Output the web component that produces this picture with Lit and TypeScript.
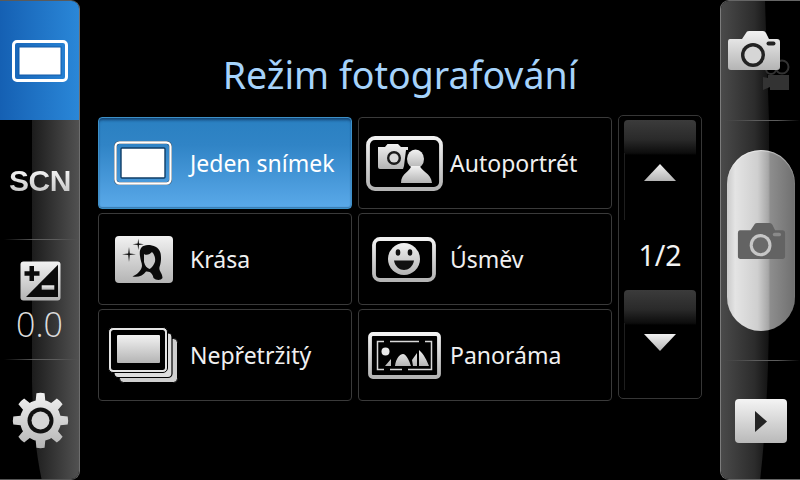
import { LitElement, html, css, svg } from "lit";
import { customElement } from "lit/decorators.js";

function gearPath(cx: number, cy: number, ro: number, ri: number, teeth: number) {
  const pts: string[] = [];
  const step = (Math.PI * 2) / teeth;
  for (let i = 0; i < teeth; i++) {
    const a = -Math.PI / 2 + i * step;
    const p = (r: number, d: number) => `${(cx + r * Math.cos(a + d)).toFixed(2)} ${(cy + r * Math.sin(a + d)).toFixed(2)}`;
    pts.push(`${i ? "L" : "M"}${p(ri, -step * 0.3)}`, `L${p(ro, -step * 0.19)}`, `Q${p(ro + 0.6, 0)} ${p(ro, step * 0.19)}`, `L${p(ri, step * 0.3)}`);
    pts.push(`Q${p(ri + 0.3, step * 0.4)} ${p(ri, step * 0.5)}`);
  }
  return pts.join(" ") + "Z";
}

const camera = (body: string, ring: string, center: string, flash: string) => svg`
  <path d="M3 9 H15 L19 3 Q19.5 1 22 1 H36 Q38 1 39 3 L42 9 H50 Q53 9 53 12 V37 Q53 40 50 40 H4 Q1 40 1 37 V12 Q1 9 3 9Z" fill="${body}"/>
  <circle cx="26" cy="25" r="12" fill="${ring}"/>
  <circle cx="26" cy="25" r="8.6" fill="${center}"/>
  <rect x="39.5" y="11.5" width="9" height="4" rx="2" fill="${flash}"/>`;

@customElement("app-root")
export class AppRoot extends LitElement {
  static styles = css`
    :host { display: block; width: 800px; height: 480px; background: #000; overflow: hidden; font-family: "Noto Sans", "Open Sans", sans-serif; color: #f2f2f2; }
    .defs { position: absolute; width: 0; height: 0; }
    .screen { display: flex; width: 800px; height: 480px; }
    .rail { position: relative; width: 80px; height: 480px; box-sizing: border-box; flex: none; display: flex; flex-direction: column; overflow: hidden; }
    .rail.left { border-right: 1px solid #6e6e6e; border-bottom: 1px solid #555; border-top: 1px solid #5a5a5a; border-radius: 0 9px 9px 0; }
    .rail.right { border-left: 1px solid #7c7c7c; border-top: 1px solid #666; border-bottom: 1px solid #666; border-radius: 9px 0 0 9px; }
    .sheen { position: absolute; left: 0; top: 0; width: 80px; height: 480px; }
    .item { position: relative; height: 120px; flex: none; display: flex; flex-direction: column; align-items: center; justify-content: center; box-sizing: border-box; }
    .left .item.first { height: 119px; background: linear-gradient(90deg, #1560b3, #2a87d8); }
    .sep::after { content: ""; position: absolute; left: 4px; right: 0; bottom: 0; height: 1px; background: linear-gradient(90deg, transparent, #5c5c5c 40%, #5c5c5c 70%, transparent); }
    .scntext { font: 700 30px "Liberation Sans", Arial, sans-serif; letter-spacing: -0.5px; background: linear-gradient(180deg, #fff, #bdbdbd); -webkit-background-clip: text; background-clip: text; color: transparent; margin: 1px 0 0 1px; }
    .ev { font-size: 34px; line-height: 34px; font-weight: 300; color: #dcdcdc; margin-top: 6px; font-family: "Open Sans", "Noto Sans", sans-serif; }
    .evwrap { padding-top: 2px; }
    .shift { margin-left: 1px; }
    .main { flex: 1; display: flex; flex-direction: column; align-items: center; min-width: 0; }
    h1 { margin: 0; height: 117px; box-sizing: border-box; padding-top: 48px; font-weight: 400; font-size: 37.5px; line-height: 54px; color: #a6d3fb; white-space: nowrap; }
    .body { display: flex; gap: 6px; align-self: flex-start; margin-left: 18px; }
    .grid { display: grid; grid-template-columns: 254px 254px; grid-auto-rows: 92px; column-gap: 6px; row-gap: 4px; }
    .cell { display: flex; align-items: center; box-sizing: border-box; border: 1px solid #3a3a3a; border-radius: 4px; font-size: 23px; color: #f0f0f0; }
    .cell.on { background: linear-gradient(180deg, #2a80c1 0%, #3084c6 30%, #5aa9e9 100%); border-color: #3d90c8; color: #fff; box-shadow: inset 0 3px 3px -1px rgba(10, 40, 80, .7), inset 0 -1px 1px rgba(10, 50, 90, .4); }
    .slot { width: 90px; margin-right: 1px; flex: none; display: flex; justify-content: center; align-items: center; }
    .slot svg, .item svg { display: block; }
    .slot svg.nudge { margin-right: 2px; }
    .pager { width: 84px; height: 284px; margin-top: -2px; box-sizing: border-box; border: 1px solid #363636; border-radius: 5px; padding: 4px; display: flex; flex-direction: column; align-items: center; }
    .pbtn { position: relative; width: 72px; height: 35px; flex: none; border-radius: 4px 4px 0 0; background: linear-gradient(180deg, #3b3b3b 0%, #2a2a2a 55%, #0c0c0c 95%, #000 100%); }
    .pbtn::after { content: ""; position: absolute; left: 0; top: 33px; width: 1px; height: 67px; background: #1e1e1e; }
    .arrow { margin-top: 9px; flex: none; display: block; }
    .page { height: 109px; flex: none; box-sizing: border-box; padding-top: 40px; display: flex; align-items: center; justify-content: center; font-size: 28.5px; color: #f2f2f2; line-height: 1; }
    .rail.right .item { align-items: flex-start; padding-left: 6px; }
    .item.tall { height: 240px; }
    .shutter { width: 68px; height: 181px; flex: none; border-radius: 34px; display: flex; align-items: center; justify-content: center; background: linear-gradient(90deg, #c9c9c9 0%, #e4e4e4 12%, #cfcfcf 45%, #a9a9a9 60%, #a0a0a0 62%, #8e8e8e 63%, #6f6f6f 100%); margin-top: -1px; box-shadow: inset 0 1px 1px rgba(255,255,255,.5); }
    .play { width: 52px; height: 44px; border-radius: 4px; background: linear-gradient(180deg, #f4f4f4, #b9b9b9); display: flex; align-items: center; justify-content: center; margin-left: 8px; }
  `;

  cell(icon: unknown, label: string, on = false) {
    return html`<div class="cell ${on ? "on" : ""}"><div class="slot">${icon}</div><span>${label}</span></div>`;
  }

  render() {
    const single = html`<svg class="nudge" width="58" height="44" viewBox="0 0 58 44">
      <rect x="1.500" y="1.500" width="55" height="41" rx="4" fill="none" stroke="#123" stroke-width="3"/>
      <rect x="1.500" y="1.500" width="55" height="41" rx="4" fill="none" stroke="#fff" stroke-width="2.400"/>
      <rect x="7" y="7" width="44" height="30" rx="1" fill="#fff" stroke="#0f3d66" stroke-width="1.400"/></svg>`;
    const beauty = html`<svg width="58" height="47" viewBox="0 0 58 47">
      <rect width="58" height="47" rx="4" fill="url(#lg)"/>
      <path d="M33 9 C26 9 24 14 25 20 C25.500 26 28 28 26.500 32 C25 36 21 39 17.500 40.500 C23 41.500 28 40 31 35.500 C36 35 38 39 38.500 42 C41 44.500 46 44.500 47.500 42 C47.500 37 43.500 35 44.500 31 C46 27 46.500 22 45.500 17 C44 11 38 9 33 9Z" fill="#0a0a0a"/>
      <path d="M29 18 C32 20 35 18 37 16 C40 19 41 24 39.500 27 C38 30 36 32.500 34.500 33 C32 32 30 30 29 26Z" fill="#c9c9c9"/>
      <path d="M23.300 2.800 L24 7.500 L29 8.300 L24 9 L23.300 14 L22.600 9 L17.600 8.300 L22.600 7.500Z" fill="#111"/>
      <path d="M14 11 L14.800 17.500 L21 18.300 L14.800 19 L14 26 L13.200 19 L7 18.300 L13.200 17.500Z" fill="#111"/></svg>`;
    const burst = html`<svg class="nudge" width="70" height="56" viewBox="0 0 70 56">
      <rect x="11.500" y="11.500" width="58" height="44" rx="4" fill="#cfcfcf" stroke="#000" stroke-width="1"/>
      <rect x="6" y="6" width="58" height="44.500" rx="4" fill="#dedede" stroke="#000" stroke-width="1.200"/>
      <rect x="0.500" y="0.500" width="59" height="45" rx="4.500" fill="#e4e4e4" stroke="#000" stroke-width="1"/>
      <rect x="3" y="3" width="54" height="40" rx="2.500" fill="#000"/>
      <rect x="9" y="8" width="43" height="28" rx="1" fill="url(#lg)"/></svg>`;
    const selfie = html`<svg width="77" height="55" viewBox="0 0 77 55">
      <rect x="2" y="2" width="73" height="51" rx="7" fill="none" stroke="url(#lg)" stroke-width="3.800"/>
      <path d="M12 11 H19 L21.500 8 H32 L35 11 H42 V33 H14 Q12 33 12 31Z" fill="url(#lg)"/>
      <circle cx="28" cy="22" r="7" fill="#1a1a1a"/><circle cx="28" cy="22" r="4.600" fill="#d8d8d8"/>
      <path d="M40 14 H60 V30 L68 48 H32 L38 30Z" fill="#000"/>
      <ellipse cx="49.500" cy="23" rx="8.500" ry="9.500" fill="url(#lg)"/>
      <path d="M45 30 H54 C55 35 65 37 66 47 H35 C35 37 45 35 45 30Z" fill="url(#lg)"/></svg>`;
    const smile = html`<svg width="64" height="45" viewBox="0 0 64 45">
      <rect x="2" y="2" width="60" height="41" rx="6" fill="none" stroke="url(#lg)" stroke-width="3.800"/>
      <circle cx="32" cy="22" r="16" fill="url(#lg)"/>
      <ellipse cx="26" cy="15.500" rx="2.300" ry="3.200" fill="#111"/><ellipse cx="38" cy="15.500" rx="2.300" ry="3.200" fill="#111"/>
      <path d="M22 23.500 H42 C41 30 36 33 32 33 C28 33 23 30 22 23.500Z" fill="#111"/></svg>`;
    const pano = html`<svg width="73" height="47" viewBox="0 0 73 47">
      <rect x="2" y="2" width="69" height="43" rx="3" fill="none" stroke="url(#lg)" stroke-width="3.800"/>
      <path d="M16 9.500 H9.500 V37.500 H16 M22 37.500 H34 M40 37.500 H63.500 V9.500 H57 M22 9.500 H51" fill="none" stroke="#d8d8d8" stroke-width="1.500"/>
      <circle cx="17.500" cy="19.500" r="4" fill="#e8e8e8"/>
      <path d="M17 34 L23 27 V34Z M27 34 C28 26 32 22 35 22 C38 22 41 28 43 34Z M45 34 L44 28 L49 21 V34Z M51 34 V18 C56 22 59 29 61 34Z" fill="url(#lg)"/></svg>`;

    return html`
      <svg class="defs" aria-hidden="true"><defs>
        <linearGradient id="lg" x1="0" y1="0" x2="0" y2="1"><stop offset="0" stop-color="#f2f2f2"/><stop offset="1" stop-color="#b4b4b4"/></linearGradient>
        <linearGradient id="lr" x1="0" y1="0" x2="1" y2="0"><stop offset="0" stop-color="#1c1c1c"/><stop offset="1" stop-color="#525252"/></linearGradient>
        <linearGradient id="rr" x1="0" y1="0" x2="1" y2="0"><stop offset="0" stop-color="#4a4a4a"/><stop offset=".7" stop-color="#2c2c2c"/><stop offset="1" stop-color="#121212"/></linearGradient>
      </defs></svg>
      <div class="screen">
        <div class="rail left">
          <svg class="sheen" viewBox="0 0 80 480"><path d="M80 0 H32 V380 Q33 440 42 480 H80Z" fill="url(#lr)"/></svg>
          <div class="item first">
            <svg width="56" height="42" viewBox="0 0 56 42">
              <rect x="1.500" y="1.500" width="53" height="39" rx="3.500" fill="none" stroke="#fff" stroke-width="3"/>
              <rect x="7" y="7" width="42" height="28" fill="#fff" stroke="#135ba8" stroke-width="1"/></svg>
          </div>
          <div class="item sep"><span class="scntext">SCN</span></div>
          <div class="item sep evwrap">
            <svg class="shift" width="41" height="40" viewBox="0 0 41 40">
              <rect x=".5" y=".5" width="40" height="39" rx="3" fill="url(#lg)"/>
              <path d="M6 36 L38 3.700 V36Z" fill="#0b0b0b"/>
              <path d="M4.500 10.200 H9.500 V5 H14 V10.200 H19.500 V14.700 H14 V20 H9.500 V14.700 H4.500Z" fill="#0b0b0b"/>
              <rect x="21.700" y="24.300" width="12.600" height="4.400" fill="url(#lg)"/></svg>
            <span class="ev">0.0</span>
          </div>
          <div class="item">
            <svg class="shift" width="57" height="57" viewBox="0 0 57 57">
              <path d="${gearPath(28.5, 28.5, 27.5, 20.5, 8)}" fill="url(#lg)"/>
              <circle cx="28.5" cy="28.5" r="13" fill="#111"/><circle cx="28.5" cy="28.5" r="9" fill="#d5d5d5"/></svg>
          </div>
        </div>

        <div class="main">
          <h1>Režim fotografování</h1>
          <div class="body">
            <div class="grid">
              ${this.cell(single, "Jeden snímek", true)}
              ${this.cell(selfie, "Autoportrét")}
              ${this.cell(beauty, "Krása")}
              ${this.cell(smile, "Úsměv")}
              ${this.cell(burst, "Nepřetržitý")}
              ${this.cell(pano, "Panoráma")}
            </div>
            <div class="pager">
              <div class="pbtn"></div>
              <svg class="arrow" width="32" height="17" viewBox="0 0 32 17"><path d="M16 0 L32 17 H0Z" fill="url(#lg)"/></svg>
              <div class="page">1/2</div>
              <div class="pbtn"></div>
              <svg class="arrow" width="32" height="17" viewBox="0 0 32 17"><path d="M0 0 H32 L16 17Z" fill="url(#lg)"/></svg>
            </div>
          </div>
        </div>

        <div class="rail right">
          <svg class="sheen" viewBox="0 0 80 480"><path d="M0 0 H44 Q46 60 48 120 V300 Q48 400 39 480 H0Z" fill="url(#rr)"/></svg>
          <div class="item sep">
            <svg width="64" height="62" viewBox="0 0 64 62">
              <g fill="#333"><circle cx="44" cy="39" r="5" fill="none" stroke="#333" stroke-width="2"/><circle cx="55" cy="37" r="6.500" fill="none" stroke="#333" stroke-width="2"/><path d="M41 45 H62 V60 H43 V57 L36 60 V47 L41 48Z"/></g>
              ${camera("url(#lg)", "#222", "#d6d6d6", "#222")}
            </svg>
          </div>
          <div class="item sep tall">
            <div class="shutter">
              <svg width="49" height="38" viewBox="0 0 54 41" preserveAspectRatio="none">
                ${camera("#636363", "#c7c7c7", "#6a6a6a", "#8a8a8a")}
              </svg>
            </div>
          </div>
          <div class="item">
            <div class="play"><svg width="12" height="21" viewBox="0 0 12 21"><path d="M0 0 L12 10.500 L0 21Z" fill="#232323"/></svg></div>
          </div>
        </div>
      </div>`;
  }
}
